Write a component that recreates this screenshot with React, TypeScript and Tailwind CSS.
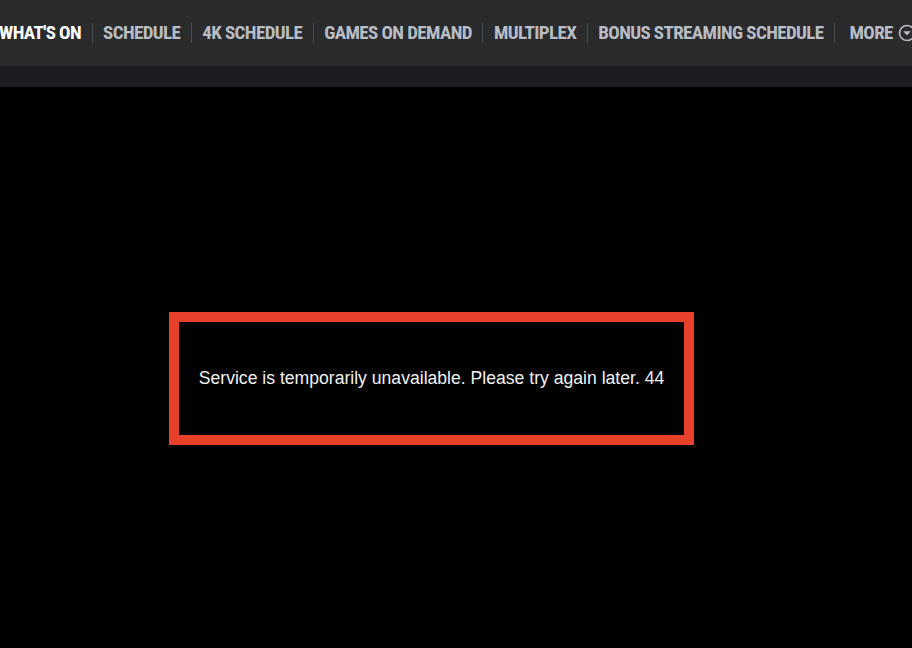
const navItems = [
  "WHAT'S ON",
  "SCHEDULE",
  "4K SCHEDULE",
  "GAMES ON DEMAND",
  "MULTIPLEX",
  "BONUS STREAMING SCHEDULE",
];

const MoreIcon = () => (
  <svg width="18" height="18" viewBox="0 0 18 18" className="shrink-0">
    <circle cx="9" cy="9" r="7.5" fill="none" stroke="#b8bcc4" strokeWidth="1.6" />
    <path d="M5.2 7.2 H12.8 L9 11.4 Z" fill="#b8bcc4" />
  </svg>
);

export default function App() {
  return (
    <div className="min-h-[648px] w-full overflow-hidden bg-black">
      {/* top nav */}
      <header className="bg-[#2a2b2d]">
        <nav
          className="-ml-[1px] flex h-[66px] items-center whitespace-nowrap text-[19px] font-bold tracking-[-0.6px] text-[#b8bcc4]"
          style={{ fontFamily: 'Roboto, "DejaVu Sans Condensed", sans-serif', fontStretch: "condensed" }}
        >
          {navItems.map((label, i) => (
            <div key={label} className="flex items-center">
              <span className={i === 0 ? "text-white" : ""}>{label}</span>
              <span className="mx-[10.5px] h-[20px] w-px bg-[#4a4b4e]" />
            </div>
          ))}
          <div className="flex items-center gap-[5px] pl-[4px]">
            <span>MORE</span>
            <MoreIcon />
          </div>
        </nav>
      </header>
      <div className="h-[21px] bg-[#1c1d20]" />

      {/* error box */}
      <main className="pl-[169px] pt-[225px]">
        <div className="flex h-[133px] w-[525px] items-center justify-center border-[10px] border-[#e8412b] bg-black">
          <p
            className="text-[17.6px] text-[#f2f2f2]"
            style={{ fontFamily: '"Liberation Sans", Arial, sans-serif' }}
          >
            Service is temporarily unavailable. Please try again later. 44
          </p>
        </div>
      </main>
    </div>
  );
}
